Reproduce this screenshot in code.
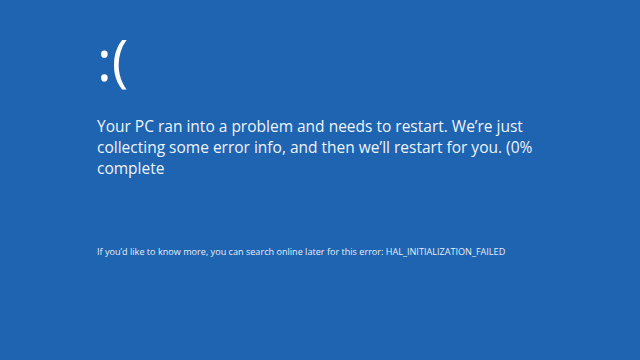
export default function App() {
  return (
    <div className="w-[640px] h-[360px] bg-[#1e64b1] text-white overflow-hidden" style={{ fontFamily: '"Open Sans", "Noto Sans", sans-serif' }}>
      <div className="pl-[97px] pt-[26px] w-[560px]">
        <div className="text-[56px] leading-[66px] font-normal">:(</div>
        <p className="mt-[24px] text-[15.5px] leading-[21px] text-[#eef3fa]">
          Your PC ran into a problem and needs to restart. We’re just collecting some error info, and then we’ll restart for you. (0% complete
        </p>
        <p className="mt-[67px] text-[9.1px] leading-[12px] text-[#e8eef8]">
          If you’d like to know more, you can search online later for this error: HAL_INITIALIZATION_FAILED
        </p>
      </div>
    </div>
  );
}
